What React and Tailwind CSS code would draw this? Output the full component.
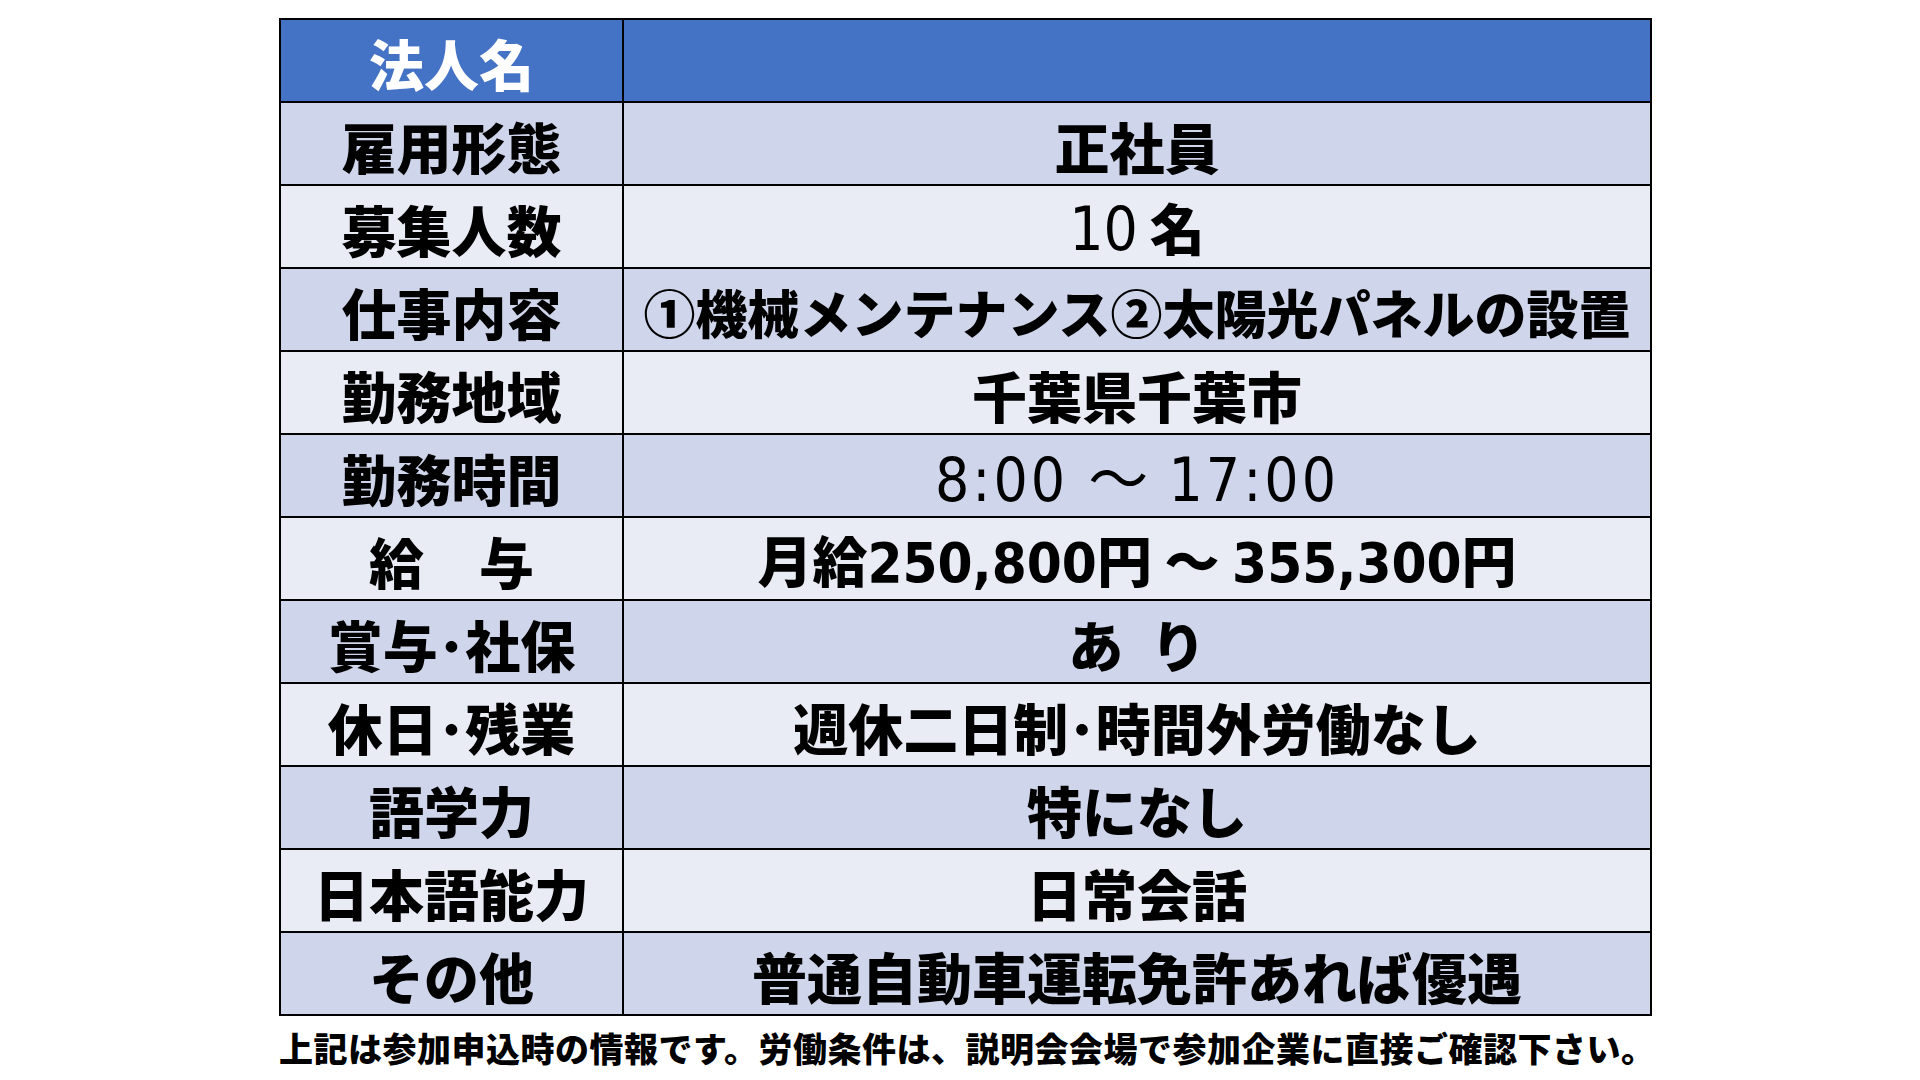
import React from "react";

// narrow digits like the original slide
const num = "font-['Liberation_Sans_Narrow','DejaVu_Sans_Condensed','Noto_Sans_CJK_JP',sans-serif]";

const rows = [
  { label: "雇用形態", value: "正社員" },
  {
    label: "募集人数",
    value: (
      <>
        <span className={num + " font-normal text-[60px]"}>10</span>
        <span className="inline-block w-[12px]" />名
      </>
    ),
  },
  { label: "仕事内容", value: "①機械メンテナンス②太陽光パネルの設置", small: true },
  { label: "勤務地域", value: "千葉県千葉市" },
  {
    label: "勤務時間",
    value: (
      <span className={num + " font-normal text-[60px] tracking-[3px]"}>
        8:00 <span className="font-['Noto_Sans_CJK_JP',sans-serif] tracking-normal">～</span> 17:00
      </span>
    ),
  },
  {
    label: "給　与",
    value: (
      <>
        月給<span className={num + " font-bold text-[56px]"}>250,800</span>円 ～{" "}
        <span className={num + " font-bold text-[56px]"}>355,300</span>円
      </>
    ),
  },
  { label: "賞与･社保", value: "あ\u2002り" },
  { label: "休日･残業", value: "週休二日制･時間外労働なし" },
  { label: "語学力", value: "特になし" },
  { label: "日本語能力", value: "日常会話" },
  { label: "その他", value: "普通自動車運転免許あれば優遇" },
];

const App = () => {
  return (
    <div className="w-[1920px] h-[1080px] bg-white pl-[279px] pt-[18px] font-['Noto_Sans_CJK_JP',sans-serif] text-black">
      <table className="border-collapse w-[1373px] table-fixed">
        <colgroup>
          <col className="w-[343px]" />
          <col />
        </colgroup>
        <tbody>
          {/* header row */}
          <tr className="h-[83px] bg-[#4472C4]">
            <td className="border-2 border-black text-center text-white font-black text-[55px] leading-none pt-[4px]">
              法人名
            </td>
            <td className="border-2 border-black"></td>
          </tr>

          {rows.map((r, i) => (
            <tr
              key={r.label}
              className={"h-[83px] " + (i % 2 === 0 ? "bg-[#CFD5EA]" : "bg-[#E9EBF5]")}
            >
              <td className="border-2 border-black text-center font-black text-[55px] leading-none pt-[4px]">
                {r.label}
              </td>
              <td
                className={
                  "border-2 border-black text-center font-black leading-none pt-[4px] whitespace-nowrap " +
                  (r.small ? "text-[52px]" : "text-[55px]")
                }
              >
                {r.value}
              </td>
            </tr>
          ))}
        </tbody>
      </table>

      <p className="mt-[12px] text-[34px] leading-[40px] font-black tracking-[0.5px] whitespace-nowrap">
        上記は参加申込時の情報です。労働条件は、説明会会場で参加企業に直接ご確認下さい。
      </p>
    </div>
  );
};

export default App;
